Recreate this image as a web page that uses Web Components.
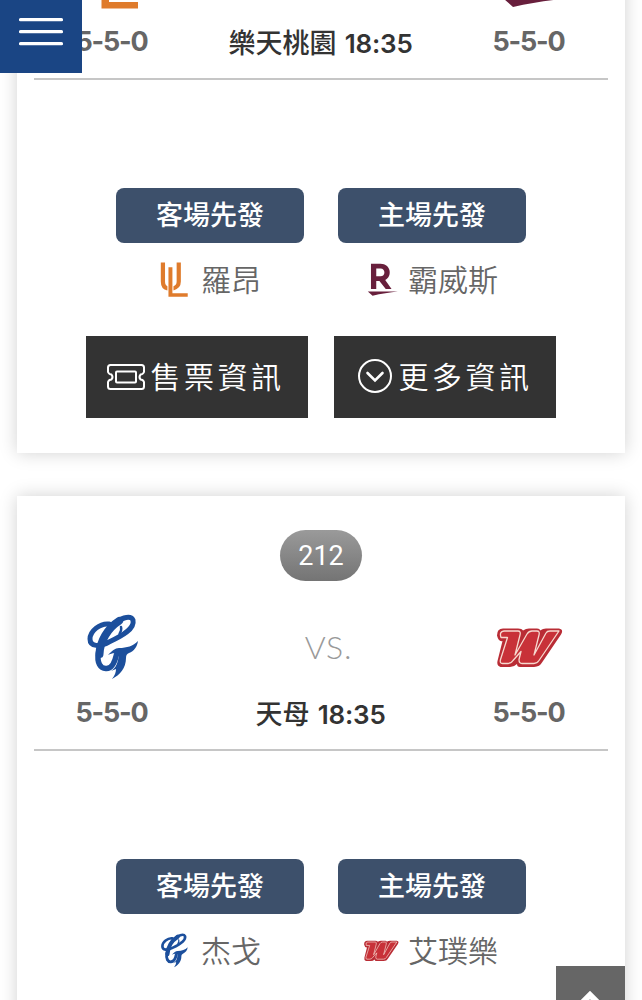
<!DOCTYPE html>
<html lang="zh-Hant">
<head>
<meta charset="utf-8">
<title>賽程</title>
<style>
html,body{margin:0;height:100%;overflow:hidden;background:#fff}
body{font-family:Inter,"Noto Sans CJK TC",sans-serif}
</style>
</head>
<body>
<game-schedule></game-schedule>
<script>
const define=(name,html)=>customElements.define(name,class extends HTMLElement{
  connectedCallback(){
    if(this.shadowRoot)return;
    const root=this.attachShadow({mode:"open"});
    const t=document.createElement("template");
    t.innerHTML=typeof html==="function"?html(this):html;
    root.append(t.content.cloneNode(true));
  }
});

const LOGOS={
lions:`<path fill="#df7b2c" d="M11 3h8v36q0 7 4.500 9v8q-12.500-2-12.500-17zM41 3h8v36q0 13-14 17v-8q6-2 6-9zM25.500 12H33v49h29v6.500H25.500z"/>`,
monkeys:`<g fill="#681f3c"><path fill-rule="evenodd" d="M17 5h18c20 0 23 24 9 31l12 17H45L33 38h-6v15H17zM27 14v15h8c10 0 10-15 0-15z"/><path d="M11 58h57c-15 2-32 4-48 8z"/></g>`,
guardians:`<g fill="none" stroke="#1c4f9c" stroke-linecap="round" stroke-linejoin="round"><path stroke-width="5" d="M33 12C24 11 14 19 14 27c0 8 10 8 19 3 13-6 26-13 24-22-3-6-14-1-20 5"/><path stroke-width="8" d="M43 9C32 16 24 29 23.500 42"/><path stroke-width="5.500" d="M22.500 40c-2 11 2 17 8 16.500 5 0 8-5 10-14"/><path stroke-width="2.400" d="M45 15q1 3-1.500 7"/></g><path fill="#1c4f9c" d="M32 43c4-4 7-7 11-7 8 0 14-2 19-7-1 6-4 10-9 12-2 1-3 2-3 5 0 10-6 17-14 21 3-4 4-7 4-10l-5 2c5-3 7-8 8-17-4-1-7-1-11 1z"/>`,
dragons:`<path fill="#b92c35" d="M4 23.500q0-7 6-7h15q4 0 5 2 3-2 6-2h8q3 0 3 2 3-2 6-2h13q5 1 2 6L49 50.500q-2 4-8 4.500H27q-3 0-3-3-3 3-7 3H7.500q-4-1-3-6l5-20q-4 1-5.500-5.500z"/><path fill="#c83138" stroke="#f7d9cf" stroke-width="1.300" stroke-linejoin="round" d="M8 25.500q-2-6 3-6.500h14q3 0 2 4l-5 20 12-21q2-3 5-3h5q3 0 2 4l-5 20 12-22q1-2 4-2h9L46 48.500q-2 3-5 3H29q-3 0-3-4l2-8-8 9q-2 3-5 3H9.500q-3 0-2-4l7-22z"/>`
};
define("team-logo",el=>`<style>:host{display:block;width:var(--logo-size,72px);height:var(--logo-size,72px);flex:none}svg{display:block;width:100%;height:100%}</style><svg viewBox="0 0 72 72">${LOGOS[el.getAttribute("team")]}</svg>`);

define("team-record",el=>`<style>
:host{display:flex;flex-direction:column;align-items:center;color:#666}
.r{font:700 27px/36px Inter,sans-serif;letter-spacing:-1.200px;margin:11px 1px 0 0;white-space:nowrap}
</style><team-logo team="${el.getAttribute("team")}"></team-logo><div class="r"><slot></slot></div>`);

define("starting-pitcher",el=>`<style>
:host{display:flex;flex-direction:column;align-items:center;width:188px}
.label{box-sizing:border-box;width:188px;height:55px;border-radius:8px;background:#3d506b;color:#fff;font:500 27px/52px "Noto Sans CJK TC",sans-serif;text-align:center}
.name{--logo-size:38px;display:flex;align-items:center;gap:8px;height:38px;margin:18.500px 4px 0 0;color:#666;font:350 30px/38px "Noto Sans CJK TC",sans-serif;white-space:nowrap}
.name span{padding-bottom:4px}
</style><div class="label">${el.getAttribute("label")}</div><div class="name"><team-logo team="${el.getAttribute("team")}"></team-logo><span><slot></slot></span></div>`);

define("card-button",`<style>
:host{display:flex;box-sizing:border-box;width:222px;height:82px;padding-left:21px;align-items:center;gap:5.500px;background:#333;color:#fff;font:350 30px/40px "Noto Sans CJK TC",sans-serif;letter-spacing:3.500px;white-space:nowrap}
span{padding-bottom:5px}
</style><slot name="icon"></slot><span><slot></slot></span>`);

define("game-card",el=>{const a=n=>el.getAttribute(n);return `<style>
:host{display:block;box-sizing:border-box;height:628px;margin:0 17px;padding:34px 17px 0;background:#fff;box-shadow:0 0 17px rgba(0,0,0,.18)}
.no{width:82px;height:51px;margin:0 auto;border-radius:26px;background:linear-gradient(#9a9a9a,#747474);color:#fff;font:400 27px/52px Roboto,sans-serif;text-align:center}
.teams{display:grid;grid-template-columns:156px 1fr 158px;height:137px;padding-top:31px;border-bottom:2px solid #c6c6c6}
.mid{text-align:center;white-space:nowrap}
.vs{height:72px;padding-left:17px;font:300 32px/69px Lato,sans-serif;letter-spacing:.8px;color:#999}
.place{margin-top:11px;padding-left:1px;font:600 26px/36px Inter,"Noto Sans CJK TC",sans-serif;letter-spacing:-.200px;color:#333}
.place b{font:500 27px/36px "Noto Sans CJK TC",sans-serif;letter-spacing:0;margin-right:2px}
.p{display:flex;justify-content:center;gap:34px;padding-top:107.600px}
.b{display:flex;justify-content:center;gap:26px;margin-top:37px}
svg{display:block;flex:none;fill:none;stroke:#fff}
</style>
<div class="no">${a("no")||""}</div>
<div class="teams"><team-record team="${a("away")}">5-5-0</team-record>
<div class="mid"><div class="vs">${a("no")?"VS.":""}</div><div class="place"><b>${a("place")}</b> ${a("time")}</div></div>
<team-record team="${a("home")}">5-5-0</team-record></div>
<div class="p"><starting-pitcher label="客場先發" team="${a("away")}">${a("away-pitcher")}</starting-pitcher><starting-pitcher label="主場先發" team="${a("home")}">${a("home-pitcher")}</starting-pitcher></div>
${el.hasAttribute("actions")?`<div class="b"><card-button><svg slot="icon" width="38" height="26" viewBox="0 0 38 26" stroke-width="2"><path d="M3.500 1h31q2.500 0 2.500 2.500V8q-1 2.500-3.500 2.500-2 2.500 0 5Q36 15.500 37 18v4.500q0 2.500-2.500 2.500h-31Q1 25 1 22.500V18q1-2.500 3.500-2.500 2-2.500 0-5Q2 10.500 1 8V3.500Q1 1 3.500 1z"/><rect x="9" y="7.500" width="20" height="11" rx="1"/></svg>售票資訊</card-button>
<card-button><svg slot="icon" width="38" height="36" viewBox="0 0 38 36" stroke-width="2"><circle cx="20" cy="17" r="16"/><path d="M12.500 14l7.500 7.500 7.500-7.500" stroke-width="2.600" stroke-linecap="round"/></svg>更多資訊</card-button></div>`:""}`});

define("menu-button",`<style>
:host{position:fixed;left:0;top:0;width:82px;height:73px;background:#1a4584;z-index:2}
svg{display:block}
</style><svg width="82" height="73" stroke="#fff" stroke-width="3.200" stroke-linecap="round"><path d="M20.500 19.700h41M20.500 31.700h41M20.500 43.700h41"/></svg>`);

define("back-to-top",`<style>
:host{position:fixed;right:17px;top:966px;bottom:0;width:69px;background:#666;z-index:2;overflow:hidden}
svg{display:block}
</style><svg width="69" height="34" fill="none" stroke="#fff" stroke-width="6"><path d="M20 43l14-14 14 14"/></svg>`);

define("game-schedule",`<style>
:host{display:block;width:642px;height:1000px;overflow:hidden}
.list{display:flex;flex-direction:column;gap:43px;margin-top:-175px}
</style>
<div class="list">
<game-card actions away="lions" home="monkeys" place="樂天桃園" time="18:35" away-pitcher="羅昂" home-pitcher="霸威斯"></game-card>
<game-card no="212" away="guardians" home="dragons" place="天母" time="18:35" away-pitcher="杰戈" home-pitcher="艾璞樂"></game-card>
</div>
<menu-button></menu-button><back-to-top></back-to-top>`);
</script>
</body>
</html>
